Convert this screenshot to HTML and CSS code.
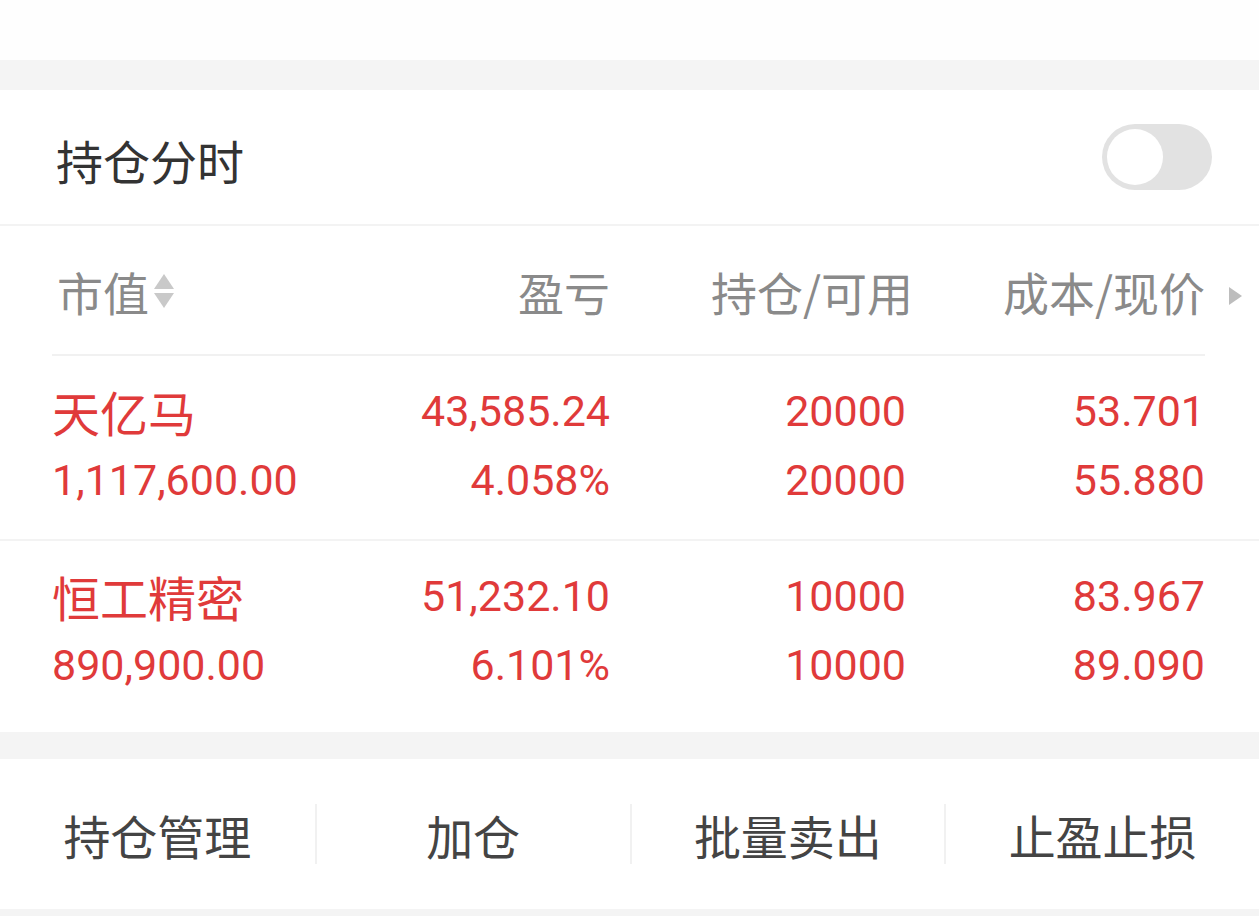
FILE: index.html
```html
<!DOCTYPE html>
<html lang="zh-CN">
<head>
    <meta charset="UTF-8">
    <meta name="viewport" content="width=device-width, initial-scale=1.0">
    <title>持仓</title>
    <link rel="stylesheet" href="styles.css">
</head>
<body>
    <div class="top-blank"></div>
    <div class="gap"></div>

    <section class="panel">
        <div class="panel-head">
            <span class="panel-title">持仓分时</span>
            <span class="switch"><span class="knob"></span></span>
        </div>

        <div class="table">
            <div class="thead">
                <div class="cell left">市值<span class="sort"><i class="up"></i><i class="down"></i></span></div>
                <div class="cell">盈亏</div>
                <div class="cell">持仓/可用</div>
                <div class="cell">成本/现价<span class="more"></span></div>
            </div>
        </div>

        <div class="row">
            <div class="table-inner">
                <div class="cell left">
                    <div class="line name">天亿马</div>
                    <div class="line">1,117,600.00</div>
                </div>
                <div class="cell">
                    <div class="line">43,585.24</div>
                    <div class="line">4.058%</div>
                </div>
                <div class="cell">
                    <div class="line">20000</div>
                    <div class="line">20000</div>
                </div>
                <div class="cell">
                    <div class="line">53.701</div>
                    <div class="line">55.880</div>
                </div>
            </div>
        </div>

        <div class="row last">
            <div class="table-inner">
                <div class="cell left">
                    <div class="line name">恒工精密</div>
                    <div class="line">890,900.00</div>
                </div>
                <div class="cell">
                    <div class="line">51,232.10</div>
                    <div class="line">6.101%</div>
                </div>
                <div class="cell">
                    <div class="line">10000</div>
                    <div class="line">10000</div>
                </div>
                <div class="cell">
                    <div class="line">83.967</div>
                    <div class="line">89.090</div>
                </div>
            </div>
        </div>
    </section>

    <div class="gap small"></div>

    <nav class="actions">
        <a class="action">持仓管理</a>
        <a class="action">加仓</a>
        <a class="action">批量卖出</a>
        <a class="action">止盈止损</a>
    </nav>
    <div class="bottom-line"></div>
</body>
</html>
```

FILE: styles.css
```css
body { margin: 0; background: #fff; font-family: Roboto, "Noto Sans CJK SC", sans-serif; width: 1259px; overflow: hidden; }

.top-blank { height: 60px; background: #fefefe; }
.gap { height: 30px; background: #f4f4f4; }
.gap.small { height: 27px; }

.panel-head { height: 134px; display: flex; align-items: center; justify-content: space-between; padding: 0 47px 0 56px; border-bottom: 2px solid #f3f3f3; }
.panel-title { font-family: "Noto Sans CJK SC", sans-serif; font-size: 47px; color: #333; padding-top: 5px; }
.switch { width: 110px; height: 66px; border-radius: 33px; background: #e2e2e2; display: flex; align-items: center; padding-left: 5px; box-sizing: border-box; }
.knob { width: 56px; height: 56px; border-radius: 50%; background: #fff; }

.table { padding: 0 54px 0 52px; }
.thead, .table-inner { display: grid; grid-template-columns: 260px 298px 300px 295px; }
.thead { height: 128px; align-items: center; border-bottom: 2px solid #f1f1f1; font-family: "Noto Sans CJK SC", sans-serif; font-size: 46px; color: #8a8a8a; }
.thead .cell { padding-top: 2px; }
.thead .cell:nth-child(3) { margin-right: -3px; }
.cell { text-align: right; white-space: nowrap; }
.cell.left { text-align: left; }
.thead .cell.left { padding-left: 5px; display: flex; align-items: center; }

.sort { display: inline-flex; flex-direction: column; gap: 4px; margin-left: 5px; }
.sort i { width: 0; height: 0; border-left: 10px solid transparent; border-right: 10px solid transparent; }
.sort .up { border-bottom: 15px solid #c9c9c9; }
.sort .down { border-top: 15px solid #c9c9c9; }

.more { display: inline-block; width: 0; height: 0; border-top: 9px solid transparent; border-bottom: 9px solid transparent; border-left: 13px solid #bdbdbd; margin-left: 24px; margin-right: -37px; vertical-align: 6px; }

.row { padding: 21px 54px 24px 52px; border-bottom: 2px solid #f3f3f3; }
.row.last { border-bottom: none; padding-bottom: 32px; }
.line { height: 69px; line-height: 69px; font-size: 43px; color: #e03a3a; }
.line.name { font-family: "Noto Sans CJK SC", sans-serif; font-size: 48px; }
.table-inner .cell:nth-child(3) { padding-right: 4px; }

.actions { height: 150px; display: grid; grid-template-columns: repeat(4, 1fr); align-items: center; }
.action { display: flex; align-items: center; justify-content: center; height: 60px; font-family: "Noto Sans CJK SC", sans-serif; font-size: 47px; color: #444; border-left: 2px solid #f1f1f1; }
.action:first-child { border-left: none; }
.bottom-line { height: 7px; background: #f4f4f4; }
```
